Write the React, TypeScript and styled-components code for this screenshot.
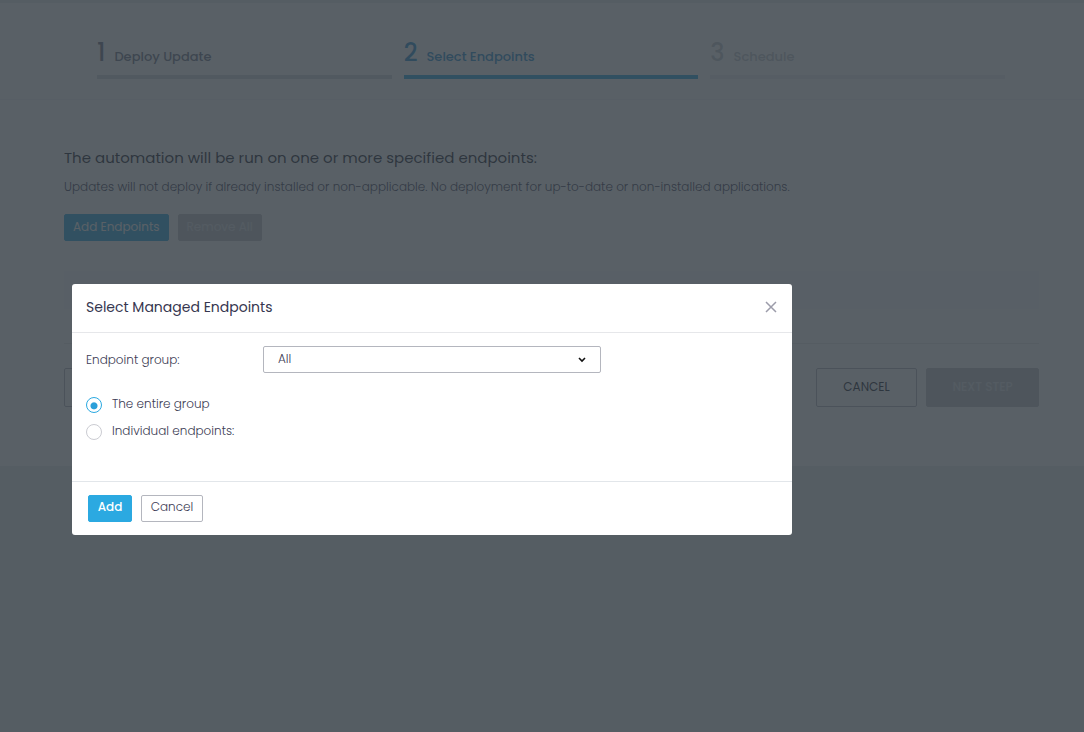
import React from "react";
import styled, { createGlobalStyle } from "styled-components";

const GlobalStyle = createGlobalStyle`
  *, *::before, *::after { box-sizing: border-box; }
  body {
    margin: 0;
    background: #ebedef;
    color: #3c3c54;
    font-family: Poppins, Inter, sans-serif;
    font-size: 12px;
    font-weight: 300;
    line-height: 18px;
  }
  button, select, input { font-family: inherit; }
  h1, h2, p, ol { margin: 0; padding: 0; }
`;

const Page = styled.main`
  margin-top: 3px;
  background: #fff;
`;

const StepsBar = styled.nav`
  padding: 33px 79px 20px 97px;
  border-bottom: 1px solid #f4f5f7;
`;

const StepList = styled.ol`
  display: grid;
  grid-template-columns: repeat(3, 1fr);
  gap: 12px;
  list-style: none;
`;

const Step = styled.li<{ $color: string; $bar: string }>`
  display: flex;
  align-items: baseline;
  gap: 9px;
  height: 43px;
  color: ${(p) => p.$color};
  border-bottom: 4px solid ${(p) => p.$bar};
  font-size: 13px;
  font-weight: 500;
`;

const StepNumber = styled.span`
  font-size: 24px;
  font-weight: 500;
  line-height: 34px;
`;

const Content = styled.section`
  padding: 48px 45px 59px 64px;
`;

const Heading = styled.h1`
  color: #1c2430;
  font-size: 15px;
  font-weight: 400;
  line-height: 20px;
`;

const Note = styled.p`
  margin-top: 10px;
`;

const Row = styled.div`
  display: flex;
  gap: 9px;
`;

const Toolbar = styled(Row)`
  margin-top: 18px;
`;

const variants = {
  primary: { bg: "#2ba9e1", fg: "#fff", line: "#2ba9e1" },
  outline: { bg: "#fff", fg: "#3c3c54", line: "#b4b6be" },
  disabled: { bg: "#c3c6ca", fg: "#e2e4e8", line: "#c3c6ca" },
};

const Button = styled.button<{ $variant: keyof typeof variants; $weight?: number }>`
  height: 27px;
  padding: 0 8px 1px;
  color: ${(p) => variants[p.$variant].fg};
  background: ${(p) => variants[p.$variant].bg};
  border: 1px solid ${(p) => variants[p.$variant].line};
  border-radius: 2px;
  font-size: 12px;
  font-weight: ${(p) => p.$weight ?? 300};
  line-height: 18px;
  white-space: nowrap;
`;

const DialogButton = styled(Button)<{ $width: number }>`
  width: ${(p) => p.$width}px;
  padding-bottom: 3px;
`;

const WizardButton = styled(Button)<{ $width: number }>`
  width: ${(p) => p.$width}px;
  height: 39px;
  color: ${(p) => (p.$variant === "outline" ? "#1c2430" : "#e2e4e8")};
`;

const EndpointTable = styled.div`
  margin-top: 30px;
  height: 73px;
  border-bottom: 1px solid #e6e8ea;
`;

const TableHeader = styled.div`
  height: 38px;
  background: #f9fafb;
`;

const WizardActions = styled(Row)`
  margin-top: 24px;
  justify-content: flex-end;

  & > :first-child { margin-right: auto; }
`;

const Overlay = styled.div`
  position: fixed;
  inset: 0;
  padding: 284px 72px 24px;
  background: rgba(50, 59, 67, 0.81);
`;

const Dialog = styled.form`
  width: 100%;
  max-width: 720px;
  background: #fff;
  border-radius: 3px;
`;

const DialogHeader = styled.header`
  display: flex;
  align-items: center;
  justify-content: space-between;
  height: 49px;
  padding: 0 14px 2px;
  border-bottom: 1px solid #e6e7ea;
`;

const DialogTitle = styled.h2`
  color: #36364f;
  font-size: 14px;
  font-weight: 400;
`;

const CloseButton = styled.button`
  display: flex;
  padding: 0;
  color: #9c9caa;
  background: none;
  border: 0;
`;

const DialogBody = styled.div`
  height: 148px;
  padding: 13px 14px;
`;

const Field = styled.div`
  display: flex;
  align-items: center;
`;

const FieldLabel = styled.label`
  width: 177px;
`;

const SelectBox = styled.div`
  position: relative;
  width: 338px;
`;

const Select = styled.select`
  display: block;
  width: 100%;
  height: 27px;
  padding: 0 32px 2px 14px;
  color: #3c3c54;
  background: #fff;
  border: 1px solid #b4b6be;
  border-radius: 2px;
  appearance: none;
  font-size: 12px;
  font-weight: 300;
`;

const Chevron = styled.svg`
  position: absolute;
  right: 15px;
  top: 11px;
  pointer-events: none;
`;

const Options = styled.div`
  display: grid;
  gap: 9px;
  margin-top: 22px;
`;

const Option = styled.label`
  display: flex;
  gap: 10px;
`;

const Radio = styled.input`
  appearance: none;
  width: 16px;
  height: 16px;
  margin: 2px 0 0;
  border: 1px solid #cbccd2;
  border-radius: 50%;

  &:checked {
    border-color: #2ba9e1;
    background: radial-gradient(circle at 50% 56%, #2b9fd9 3px, #fff 4px);
  }
`;

const DialogFooter = styled.footer`
  display: flex;
  gap: 9px;
  padding: 13px 16px;
  border-top: 1px solid #e2e6ea;
`;

export default function App() {
  return (
    <>
      <GlobalStyle />
      <Page>
        <StepsBar aria-label="Progress">
          <StepList>
            <Step $color="#6f7688" $bar="#d6d9dd">
              <StepNumber>1</StepNumber>Deploy Update
            </Step>
            <Step $color="#2b8fd0" $bar="#2ba9e1" aria-current="step">
              <StepNumber>2</StepNumber>Select Endpoints
            </Step>
            <Step $color="#c4c8ce" $bar="#eef0f2">
              <StepNumber>3</StepNumber>Schedule
            </Step>
          </StepList>
        </StepsBar>
        <Content>
          <Heading>The automation will be run on one or more specified endpoints:</Heading>
          <Note>
            Updates will not deploy if already installed or non-applicable. No deployment for up-to-date or
            non-installed applications.
          </Note>
          <Toolbar>
            <Button type="button" $variant="primary" $weight={400}>Add Endpoints</Button>
            <Button type="button" $variant="disabled" $weight={400} disabled>Remove All</Button>
          </Toolbar>
          <EndpointTable>
            <TableHeader />
          </EndpointTable>
          <WizardActions>
            <WizardButton type="button" $variant="outline" $width={101} aria-label="Previous step" />
            <WizardButton type="button" $variant="outline" $width={101} $weight={400}>CANCEL</WizardButton>
            <WizardButton type="button" $variant="disabled" $width={113} $weight={500} disabled>NEXT STEP</WizardButton>
          </WizardActions>
        </Content>
      </Page>
      <Overlay>
        <Dialog role="dialog" aria-modal="true" aria-labelledby="dialog-title">
          <DialogHeader>
            <DialogTitle id="dialog-title">Select Managed Endpoints</DialogTitle>
            <CloseButton type="button" aria-label="Close">
              <svg width="14" height="14" viewBox="0 0 14 14" fill="none" stroke="currentColor" strokeWidth="1.5">
                <path d="M2 2l10 10M12 2L2 12" />
              </svg>
            </CloseButton>
          </DialogHeader>
          <DialogBody>
            <Field>
              <FieldLabel htmlFor="group">Endpoint group:</FieldLabel>
              <SelectBox>
                <Select id="group" defaultValue="All">
                  <option>All</option>
                </Select>
                <Chevron width="8" height="6" viewBox="0 0 8 6" fill="none" stroke="#111" strokeWidth="1.6">
                  <path d="M1 1l3 3 3-3" />
                </Chevron>
              </SelectBox>
            </Field>
            <Options role="radiogroup" aria-label="Endpoints">
              <Option>
                <Radio type="radio" name="scope" defaultChecked />
                The entire group
              </Option>
              <Option>
                <Radio type="radio" name="scope" />
                Individual endpoints:
              </Option>
            </Options>
          </DialogBody>
          <DialogFooter>
            <DialogButton type="button" $variant="primary" $weight={500} $width={44}>Add</DialogButton>
            <DialogButton type="button" $variant="outline" $width={62}>Cancel</DialogButton>
          </DialogFooter>
        </Dialog>
      </Overlay>
    </>
  );
}
